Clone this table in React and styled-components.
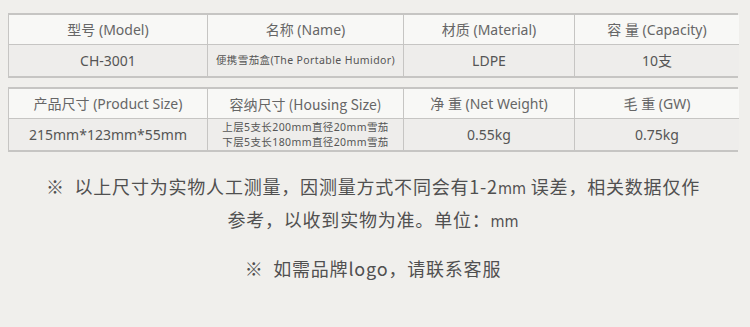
import React from 'react'
import styled, { createGlobalStyle } from 'styled-components'

const GlobalStyle = createGlobalStyle`
  html, body {
    margin: 0;
    padding: 0;
    background: #f0efec;
  }
  body {
    font-family: "Noto Sans", "Noto Sans CJK SC", sans-serif;
    color: #555;
  }
`

const Page = styled.div`
  width: 750px;
  height: 327px;
  padding: 13px 0 0 8px;
  box-sizing: border-box;
  overflow: hidden;
`

const Table = styled.div`
  width: 730px;
  display: grid;
  grid-template-columns: 199px 196px 171px 164px;
  border: 1px solid #c6c5c3;
  border-top-width: 2px;
  border-bottom-width: 2px;
  border-right-width: 2px;
  box-sizing: border-box;
  & + & {
    margin-top: 9px;
  }
`

const Cell = styled.div`
  display: flex;
  flex-direction: column;
  align-items: center;
  justify-content: center;
  text-align: center;
  height: ${p => (p.$head ? '29px' : '31px')};
  background: ${p => (p.$head ? '#f8f8f6' : '#eeedeb')};
  border-right: 1px solid #c6c5c3;
  border-bottom: ${p => (p.$head ? '1px solid #c6c5c3' : 'none')};
  font-size: ${p => p.$size || 14}px;
  line-height: ${p => (p.$size ? '14.5px' : '16px')};
  letter-spacing: ${p => (p.$size ? '0.4px' : '0')};
  color: ${p => (p.$head ? '#666' : '#555')};
  font-family: ${p =>
    p.$cjk
      ? '"Noto Sans CJK SC", sans-serif'
      : '"Noto Sans", "Noto Sans CJK SC", sans-serif'};
  white-space: nowrap;
  &:nth-child(4n) {
    border-right: none;
  }
`

const Notes = styled.div`
  width: 730px;
  margin-top: 19px;
  text-align: center;
  font-family: "Noto Sans CJK SC", sans-serif;
  font-size: 18px;
  letter-spacing: 0.8px;
  line-height: 30px;
  color: #505050;
`

const Note = styled.p`
  margin: 0;
  & + & {
    margin-top: 16px;
  }
`

const Narrow = styled.span`
  font-family: "Liberation Sans Narrow", "DejaVu Sans Condensed", sans-serif;
  font-size: 16px;
  letter-spacing: 0;
`

const specs = [
  [
    ['型号 (Model)', '名称 (Name)', '材质 (Material)', '容 量 (Capacity)'],
    ['CH-3001', '便携雪茄盒(The Portable Humidor)', 'LDPE', '10支'],
  ],
  [
    ['产品尺寸 (Product Size)', '容纳尺寸 (Housing Size)', '净 重 (Net Weight)', '毛 重 (GW)'],
    ['215mm*123mm*55mm', null, '0.55kg', '0.75kg'],
  ],
]

const App = () => (
  <Page>
    <GlobalStyle />
    {specs.map(([head, row], t) => (
      <Table key={t}>
        {head.map((h, i) => (
          <Cell key={h} $head $cjk={t === 1 && i === 1}>
            {h}
          </Cell>
        ))}
        {row.map((v, i) => {
          if (t === 0 && i === 1) {
            return (
              <Cell key={i} $size={10.5}>
                {v}
              </Cell>
            )
          }
          if (v === null) {
            return (
              <Cell key={i} $size={10.5}>
                <span>上层5支长200mm直径20mm雪茄</span>
                <span>下层5支长180mm直径20mm雪茄</span>
              </Cell>
            )
          }
          return <Cell key={i}>{v}</Cell>
        })}
      </Table>
    ))}
    <Notes>
      <Note>
        ※&nbsp; 以上尺寸为实物人工测量，因测量方式不同会有1-2<Narrow>mm</Narrow> 误差，相关数据仅作
        <br />
        参考，以收到实物为准。单位：<Narrow>mm</Narrow>
      </Note>
      <Note>※&nbsp; 如需品牌logo，请联系客服</Note>
    </Notes>
  </Page>
)

export default App
